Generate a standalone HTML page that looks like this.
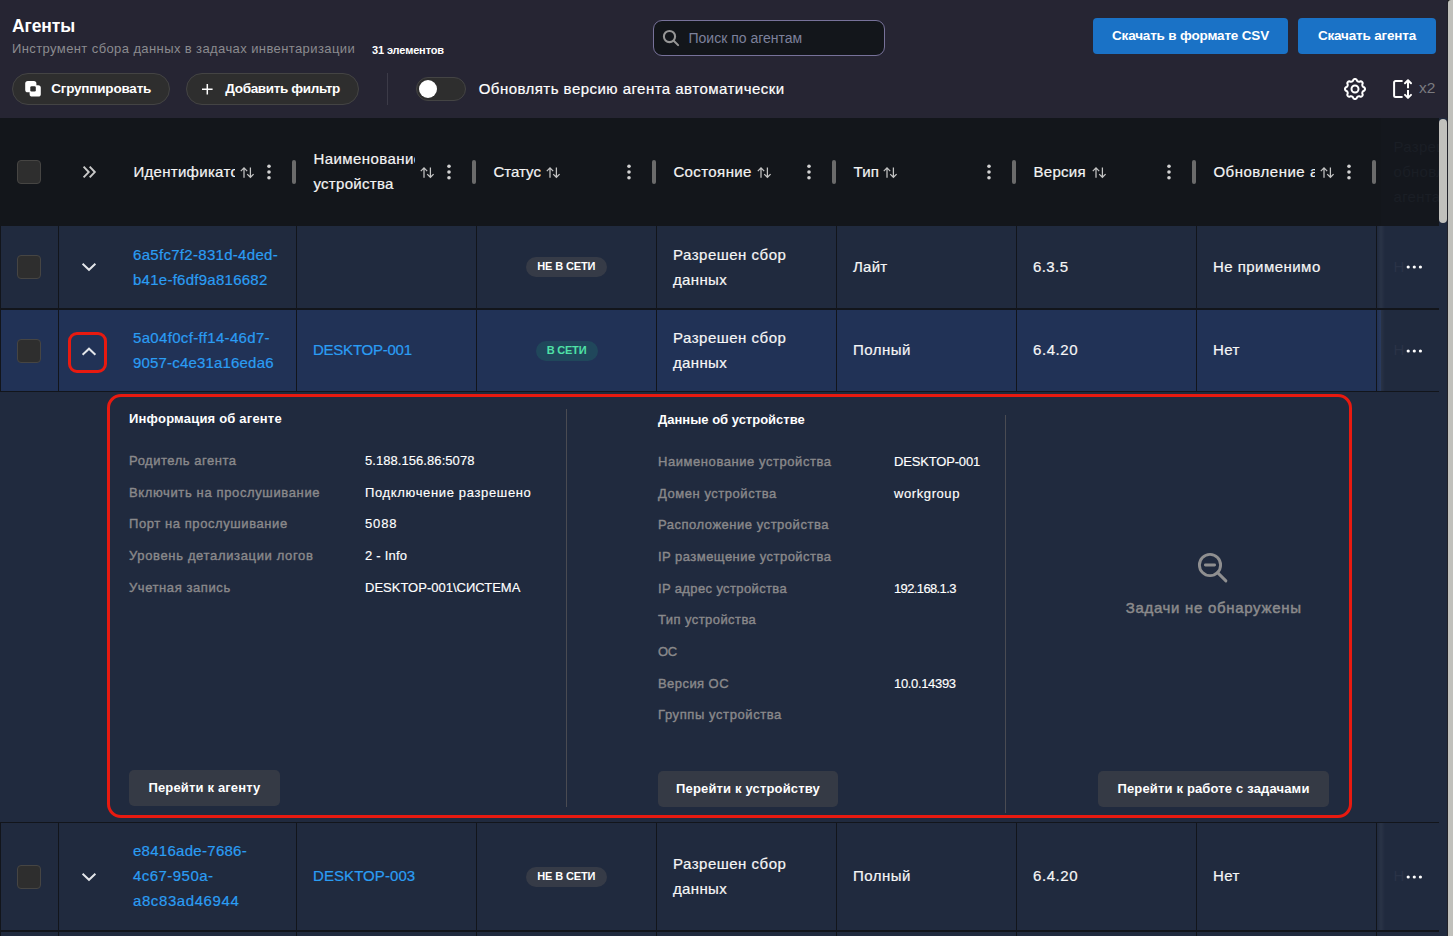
<!DOCTYPE html>
<html lang="ru">
<head>
<meta charset="utf-8">
<title>Агенты</title>
<style>
*{box-sizing:border-box;margin:0;padding:0}
html,body{width:1453px;height:936px;overflow:hidden;background:#262533}
body{font-family:"Liberation Sans",sans-serif;color:#fff;position:relative}
.a{position:absolute;white-space:nowrap}
svg{overflow:visible}
/* top bar */
.title{left:12px;top:16px;font-size:17.5px;line-height:20px;font-weight:bold;letter-spacing:-.12px}
.sub{left:12px;top:41px;font-size:13px;line-height:16px;color:#8b8b8f;letter-spacing:.4px}
.cnt{left:372px;top:43.4px;font-size:11px;line-height:14px;font-weight:bold;letter-spacing:-.13px}
.search{left:653px;top:20px;width:232px;height:36px;border:1px solid #77729a;border-radius:9px;background:#13161b}
.search span{left:34.5px;top:9px;font-size:14px;line-height:16px;color:#7d819b}
.bbtn{top:18px;height:36px;background:#1a72c6;border-radius:4px;font-size:13.5px;font-weight:bold;line-height:36px;text-align:center;letter-spacing:-.17px}
.pill{top:73px;height:32px;border:1px solid #444;border-radius:16px;background:#2e2e2e;font-size:13.5px;font-weight:bold;line-height:30px}
.vdiv{left:387px;top:73px;width:1px;height:32px;background:#3c3b48}
.toggle{left:416px;top:77px;width:50px;height:24px;border-radius:12px;background:#2e2e2e;border:1px solid #444}
.knob{left:419px;top:80px;width:18px;height:18px;border-radius:50%;background:#fff}
.tlabel{left:478.7px;top:78.9px;font-size:15px;line-height:20px;letter-spacing:.47px;-webkit-text-stroke:.2px}
/* table */
.thead{left:0;top:118px;width:1439px;height:108px;background:#13161b}
.tbody{left:0;top:226px;width:1447px;height:710px;background:#202a3e}
.tside{left:1439px;top:118px;width:8px;height:108px;background:#202a3e}
.row{left:1px;width:1438px;background:#202a3e}
.row.sel{background:#213256}
.hl{left:0;width:1439px;background:#12151b}
.vl{width:1px;background:#12151b}
.cb{left:17px;width:24px;height:24px;border-radius:4px;background:#2e2e2e;border:1px solid #464543}
.ht{font-size:15px;line-height:25px;color:#f4f4f4;overflow:hidden;-webkit-text-stroke:.2px}
.ct{font-size:15px;line-height:25px;color:#f6f6f6;letter-spacing:.4px;-webkit-text-stroke:.2px}
.lnk{color:#2b9df3;letter-spacing:.35px}
.rh{width:4px;height:24px;top:160px;border-radius:2px;background:#6b6b6b}
.badge{height:20px;border-radius:10px;font-size:11px;font-weight:bold;line-height:18px;text-align:center}
.stk{left:1381px;width:58px;background:#202a3e}
/* detail */
.red{border:3px solid #e81a10}
.dt{font-size:13px;line-height:16px;font-weight:bold}
.dl{font-size:13px;line-height:16px;color:#8a898b;letter-spacing:.56px;-webkit-text-stroke:.38px #8a898b}
.dv{font-size:13px;line-height:16px;color:#fff;-webkit-text-stroke:.15px}
.dbtn{height:36px;border-radius:5px;background:#353a45;font-size:13px;font-weight:bold;line-height:36px;text-align:center;letter-spacing:.16px}
.pd{width:1px;background:#4a4b52}
</style>
</head>
<body>
<!-- TOPBAR -->
<div class="a title">Агенты</div>
<div class="a sub">Инструмент сбора данных в задачах инвентаризации</div>
<div class="a cnt">31 элементов</div>
<div class="a search">
  <svg class="a" style="left:0;top:0" width="30" height="30" viewBox="0 0 30 30" fill="none" stroke="#969696" stroke-width="2.050" stroke-linecap="round"><circle cx="15.500" cy="15.500" r="5.600"/><path d="M19.700 19.700l4.400 4.400"/></svg>
  <span class="a">Поиск по агентам</span>
</div>
<div class="a bbtn" style="left:1093px;width:195px">Скачать в формате CSV</div>
<div class="a bbtn" style="left:1298px;width:138px">Скачать агента</div>

<div class="a pill" style="left:12px;width:158px">
  <svg class="a" style="left:12px;top:7px" width="17" height="17" viewBox="0 0 17 17"><rect x="0.200" y="0.100" width="11.200" height="11.200" rx="2.600" fill="#fff"/><rect x="4.600" y="4.300" width="11.200" height="11.300" rx="2.600" fill="#fff"/><rect x="5.300" y="5.200" width="5.500" height="5.400" rx="1.300" fill="#2e2e2e"/></svg>
  <span class="a" style="left:38.2px;top:0;letter-spacing:-.2px">Сгруппировать</span>
</div>
<div class="a pill" style="left:186px;width:173px">
  <svg class="a" style="left:14.600px;top:9.700px" width="10.600" height="10.600" viewBox="0 0 10.600 10.600" stroke="#fff" stroke-width="1.500"><path d="M5.300 0v10.600M0 5.300h10.600"/></svg>
  <span class="a" style="left:38.3px;top:0;letter-spacing:-.34px">Добавить фильтр</span>
</div>
<div class="a vdiv"></div>
<div class="a toggle"></div><div class="a knob"></div>
<div class="a tlabel">Обновлять версию агента автоматически</div>
<!-- gear -->
<svg class="a" style="left:1343px;top:77.100px" width="24" height="24" viewBox="0 0 24 24" fill="none" stroke="#fff" stroke-width="2" stroke-linejoin="round"><circle cx="12" cy="12" r="3.500"/><path d="M12.00 2.00L12.39 2.03L12.78 2.14L13.15 2.31L13.49 2.57L13.77 3.12L14.00 3.68L14.26 3.97L14.54 4.20L14.81 4.38L15.10 4.52L15.40 4.62L15.72 4.69L16.08 4.72L16.47 4.71L17.03 4.48L17.61 4.28L18.04 4.34L18.43 4.48L18.77 4.68L19.07 4.93L19.32 5.23L19.52 5.57L19.66 5.96L19.72 6.39L19.52 6.97L19.29 7.53L19.28 7.92L19.31 8.28L19.38 8.60L19.48 8.90L19.62 9.19L19.80 9.46L20.03 9.74L20.32 10.00L20.88 10.23L21.43 10.51L21.69 10.85L21.86 11.22L21.97 11.61L22.00 12.00L21.97 12.39L21.86 12.78L21.69 13.15L21.43 13.49L20.88 13.77L20.32 14.00L20.03 14.26L19.80 14.54L19.62 14.81L19.48 15.10L19.38 15.40L19.31 15.72L19.28 16.08L19.29 16.47L19.52 17.03L19.72 17.61L19.66 18.04L19.52 18.43L19.32 18.77L19.07 19.07L18.77 19.32L18.43 19.52L18.04 19.66L17.61 19.72L17.03 19.52L16.47 19.29L16.08 19.28L15.72 19.31L15.40 19.38L15.10 19.48L14.81 19.62L14.54 19.80L14.26 20.03L14.00 20.32L13.77 20.88L13.49 21.43L13.15 21.69L12.78 21.86L12.39 21.97L12.00 22.00L11.61 21.97L11.22 21.86L10.85 21.69L10.51 21.43L10.23 20.88L10.00 20.32L9.74 20.03L9.46 19.80L9.19 19.62L8.90 19.48L8.60 19.38L8.28 19.31L7.92 19.28L7.53 19.29L6.97 19.52L6.39 19.72L5.96 19.66L5.57 19.52L5.23 19.32L4.93 19.07L4.68 18.77L4.48 18.43L4.34 18.04L4.28 17.61L4.48 17.03L4.71 16.47L4.72 16.08L4.69 15.72L4.62 15.40L4.52 15.10L4.38 14.81L4.20 14.54L3.97 14.26L3.68 14.00L3.12 13.77L2.57 13.49L2.31 13.15L2.14 12.78L2.03 12.39L2.00 12.00L2.03 11.61L2.14 11.22L2.31 10.85L2.57 10.51L3.12 10.23L3.68 10.00L3.97 9.74L4.20 9.46L4.38 9.19L4.52 8.90L4.62 8.60L4.69 8.28L4.72 7.92L4.71 7.53L4.48 6.97L4.28 6.39L4.34 5.96L4.48 5.57L4.68 5.23L4.93 4.93L5.23 4.68L5.57 4.48L5.96 4.34L6.39 4.28L6.97 4.48L7.53 4.71L7.92 4.72L8.28 4.69L8.60 4.62L8.90 4.52L9.19 4.38L9.46 4.20L9.74 3.97L10.00 3.68L10.23 3.12L10.51 2.57L10.85 2.31L11.22 2.14L11.61 2.03Z"/></svg>
<!-- expand -->
<svg class="a" style="left:1391px;top:77px" width="24" height="24" viewBox="0 0 24 24" fill="none" stroke="#fff" stroke-width="2" stroke-linejoin="round"><path d="M11.600 4H4.600a1.500 1.500 0 0 0-1.500 1.500v13a1.500 1.500 0 0 0 1.500 1.500H11.600"/><path d="M17 3.400v7.900M17 12.900v7.900"/><path stroke-linecap="round" d="M14 6.300L17 3.300l3 3M14 17.900L17 20.900l3-3"/></svg>
<div class="a" style="left:1419px;top:77.700px;font-size:15.500px;line-height:20px;color:#7a7b80">x2</div>

<!-- TABLE -->
<div class="a thead"></div>
<div class="a tbody"></div>
<div class="a tside"></div>
<div class="a row" style="top:226px;height:82px"></div>
<div class="a vl" style="left:0px;top:226px;height:82px"></div>
<div class="a vl" style="left:58px;top:226px;height:82px"></div>
<div class="a vl" style="left:296px;top:226px;height:82px"></div>
<div class="a vl" style="left:476px;top:226px;height:82px"></div>
<div class="a vl" style="left:656px;top:226px;height:82px"></div>
<div class="a vl" style="left:836px;top:226px;height:82px"></div>
<div class="a vl" style="left:1016px;top:226px;height:82px"></div>
<div class="a vl" style="left:1196px;top:226px;height:82px"></div>
<div class="a vl" style="left:1376px;top:226px;height:82px"></div>
<div class="a stk" style="top:226px;height:82px"></div>
<div class="a" style="left:1377px;top:226px;width:8px;height:82px;background:linear-gradient(90deg,rgba(255,255,255,0) 0,rgba(255,255,255,.045) 50%,rgba(255,255,255,0) 100%)"></div>
<div class="a cb" style="top:255.0px"></div>
<svg class="a" style="left:82px;top:263.0px" width="14" height="7.500" viewBox="0 0 14 7.500" fill="none" stroke="#e4e6ea" stroke-width="1.950"><path d="M0.600 0.700L7 6.800l6.400-6.100"/></svg>
<div class="a ct lnk" style="left:133px;top:241.5px"><span style="letter-spacing:0.3px">6a5fc7f2-831d-4ded-</span><br><span style="letter-spacing:0.26px">b41e-f6df9a816682</span></div>
<div class="a badge" style="left:525.500px;top:257.0px;width:81.500px;background:#363b47;color:#fff;letter-spacing:-.14px">НЕ В СЕТИ</div>
<div class="a ct" style="left:673px;top:241.5px;letter-spacing:.5px">Разрешен сбор<br><span style="letter-spacing:.34px">данных</span></div>
<div class="a ct" style="left:853px;top:253.5px;letter-spacing:0.27px">Лайт</div>
<div class="a ct" style="left:1033px;top:253.5px;letter-spacing:0.42px">6.3.5</div>
<div class="a ct" style="left:1213px;top:253.5px;letter-spacing:0.46px">Не применимо</div>
<div class="a" style="left:1393.500px;top:253.5px;font-size:15px;line-height:25px;color:#2a3347">Н</div>
<svg class="a" style="left:1406px;top:265.3px" width="17" height="4" viewBox="0 0 17 4" fill="#fff"><circle cx="2.200" cy="2" r="1.600"/><circle cx="8.300" cy="2" r="1.600"/><circle cx="14.400" cy="2" r="1.600"/></svg>
<div class="a hl" style="top:308px;height:2px"></div>
<div class="a row sel" style="top:310px;height:81px"></div>
<div class="a vl" style="left:0px;top:310px;height:81px"></div>
<div class="a vl" style="left:58px;top:310px;height:81px"></div>
<div class="a vl" style="left:296px;top:310px;height:81px"></div>
<div class="a vl" style="left:476px;top:310px;height:81px"></div>
<div class="a vl" style="left:656px;top:310px;height:81px"></div>
<div class="a vl" style="left:836px;top:310px;height:81px"></div>
<div class="a vl" style="left:1016px;top:310px;height:81px"></div>
<div class="a vl" style="left:1196px;top:310px;height:81px"></div>
<div class="a vl" style="left:1376px;top:310px;height:81px"></div>
<div class="a stk" style="top:310px;height:81px"></div>
<div class="a" style="left:1377px;top:310px;width:8px;height:81px;background:linear-gradient(90deg,rgba(255,255,255,0) 0,rgba(255,255,255,.045) 50%,rgba(255,255,255,0) 100%)"></div>
<div class="a cb" style="top:338.5px"></div>
<svg class="a" style="left:82px;top:347.5px" width="14" height="7.500" viewBox="0 0 14 7.500" fill="none" stroke="#e4e6ea" stroke-width="1.950"><path d="M0.600 6.800L7 0.700l6.400 6.100"/></svg>
<div class="a ct lnk" style="left:133px;top:325.0px"><span style="letter-spacing:0.33px">5a04f0cf-ff14-46d7-</span><br><span style="letter-spacing:0.18px">9057-c4e31a16eda6</span></div>
<div class="a ct lnk" style="left:313px;top:337.0px;letter-spacing:-0.24px">DESKTOP-001</div>
<div class="a badge" style="left:536px;top:340.5px;width:62px;background:#20475b;color:#4fe1a7;letter-spacing:-.2px;text-indent:-1px">В СЕТИ</div>
<div class="a ct" style="left:673px;top:325.0px;letter-spacing:.5px">Разрешен сбор<br><span style="letter-spacing:.34px">данных</span></div>
<div class="a ct" style="left:853px;top:337.0px;letter-spacing:0.47px">Полный</div>
<div class="a ct" style="left:1033px;top:337.0px;letter-spacing:0.56px">6.4.20</div>
<div class="a ct" style="left:1213px;top:337.0px;letter-spacing:0.42px">Нет</div>
<div class="a" style="left:1393.500px;top:337.0px;font-size:15px;line-height:25px;color:#2a3347">Н</div>
<svg class="a" style="left:1406px;top:348.8px" width="17" height="4" viewBox="0 0 17 4" fill="#fff"><circle cx="2.200" cy="2" r="1.600"/><circle cx="8.300" cy="2" r="1.600"/><circle cx="14.400" cy="2" r="1.600"/></svg>
<div class="a hl" style="top:391px;height:1px"></div>
<div class="a hl" style="top:822px;height:1px"></div>
<div class="a row" style="top:823px;height:107px"></div>
<div class="a vl" style="left:0px;top:823px;height:107px"></div>
<div class="a vl" style="left:58px;top:823px;height:107px"></div>
<div class="a vl" style="left:296px;top:823px;height:107px"></div>
<div class="a vl" style="left:476px;top:823px;height:107px"></div>
<div class="a vl" style="left:656px;top:823px;height:107px"></div>
<div class="a vl" style="left:836px;top:823px;height:107px"></div>
<div class="a vl" style="left:1016px;top:823px;height:107px"></div>
<div class="a vl" style="left:1196px;top:823px;height:107px"></div>
<div class="a vl" style="left:1376px;top:823px;height:107px"></div>
<div class="a stk" style="top:823px;height:107px"></div>
<div class="a" style="left:1377px;top:823px;width:8px;height:107px;background:linear-gradient(90deg,rgba(255,255,255,0) 0,rgba(255,255,255,.045) 50%,rgba(255,255,255,0) 100%)"></div>
<div class="a cb" style="top:864.5px"></div>
<svg class="a" style="left:82px;top:872.5px" width="14" height="7.500" viewBox="0 0 14 7.500" fill="none" stroke="#e4e6ea" stroke-width="1.950"><path d="M0.600 0.700L7 6.800l6.400-6.100"/></svg>
<div class="a ct lnk" style="left:133px;top:838.0px"><span style="letter-spacing:0.28px">e8416ade-7686-</span><br><span style="letter-spacing:0.46px">4c67-950a-</span><br><span style="letter-spacing:0.59px">a8c83ad46944</span></div>
<div class="a ct lnk" style="left:313px;top:863.0px;letter-spacing:0.07px">DESKTOP-003</div>
<div class="a badge" style="left:525.500px;top:866.5px;width:81.500px;background:#363b47;color:#fff;letter-spacing:-.14px">НЕ В СЕТИ</div>
<div class="a ct" style="left:673px;top:851.0px;letter-spacing:.5px">Разрешен сбор<br><span style="letter-spacing:.34px">данных</span></div>
<div class="a ct" style="left:853px;top:863.0px;letter-spacing:0.47px">Полный</div>
<div class="a ct" style="left:1033px;top:863.0px;letter-spacing:0.56px">6.4.20</div>
<div class="a ct" style="left:1213px;top:863.0px;letter-spacing:0.42px">Нет</div>
<div class="a" style="left:1393.500px;top:863.0px;font-size:15px;line-height:25px;color:#2a3347">Н</div>
<svg class="a" style="left:1406px;top:874.8px" width="17" height="4" viewBox="0 0 17 4" fill="#fff"><circle cx="2.200" cy="2" r="1.600"/><circle cx="8.300" cy="2" r="1.600"/><circle cx="14.400" cy="2" r="1.600"/></svg>
<div class="a hl" style="top:930px;height:2px"></div>
<div class="a vl" style="left:0px;top:932px;height:4px"></div>
<div class="a vl" style="left:58px;top:932px;height:4px"></div>
<div class="a vl" style="left:296px;top:932px;height:4px"></div>
<div class="a vl" style="left:476px;top:932px;height:4px"></div>
<div class="a vl" style="left:656px;top:932px;height:4px"></div>
<div class="a vl" style="left:836px;top:932px;height:4px"></div>
<div class="a vl" style="left:1016px;top:932px;height:4px"></div>
<div class="a vl" style="left:1196px;top:932px;height:4px"></div>
<div class="a vl" style="left:1376px;top:932px;height:4px"></div>
<div class="a red" style="left:68px;top:332px;width:39px;height:41px;border-radius:9px"></div>
<div class="a cb" style="top:160px"></div>
<svg class="a" style="left:82px;top:165px" width="15" height="14" viewBox="0 0 15 14" fill="none" stroke="#c9c9c9" stroke-width="1.950"><path d="M1.600 1.700L6.700 7.050 1.600 12.400M7.700 1.700L12.800 7.050 7.700 12.400"/></svg>
<div class="a ht" style="left:133.4px;top:158.5px;width:101.5px;letter-spacing:0.3px">Идентификатор</div>
<svg class="a" style="left:240px;top:166.5px" width="15" height="12" viewBox="0 0 15 12" fill="none" stroke="#c4c4c4" stroke-width="1.25"><path d="M4 10.700V0.900M0.800 4.100L4 0.900l3.200 3.200"/><path d="M10.400 0.400V10.300M7.200 7.100L10.400 10.300l3.200-3.200"/></svg>
<svg class="a" style="left:267.1px;top:164px" width="4" height="17" viewBox="0 0 4 17" fill="#d2d2d2"><circle cx="2" cy="2.200" r="1.800"/><circle cx="2" cy="8" r="1.800"/><circle cx="2" cy="13.800" r="1.800"/></svg>
<div class="a rh" style="left:292px"></div>
<div class="a ht" style="left:313.4px;top:146.0px;width:101.5px;letter-spacing:0.3px"><span style="letter-spacing:.43px">Наименование</span><br>устройства</div>
<svg class="a" style="left:420px;top:166.5px" width="15" height="12" viewBox="0 0 15 12" fill="none" stroke="#c4c4c4" stroke-width="1.25"><path d="M4 10.700V0.900M0.800 4.100L4 0.900l3.200 3.200"/><path d="M10.400 0.400V10.300M7.200 7.100L10.400 10.300l3.200-3.200"/></svg>
<svg class="a" style="left:447.1px;top:164px" width="4" height="17" viewBox="0 0 4 17" fill="#d2d2d2"><circle cx="2" cy="2.200" r="1.800"/><circle cx="2" cy="8" r="1.800"/><circle cx="2" cy="13.800" r="1.800"/></svg>
<div class="a rh" style="left:472px"></div>
<div class="a ht" style="left:493.4px;top:158.5px;letter-spacing:0.03px">Статус</div>
<svg class="a" style="left:546px;top:166.5px" width="15" height="12" viewBox="0 0 15 12" fill="none" stroke="#c4c4c4" stroke-width="1.25"><path d="M4 10.700V0.900M0.800 4.100L4 0.900l3.200 3.200"/><path d="M10.400 0.400V10.300M7.200 7.100L10.400 10.300l3.200-3.200"/></svg>
<svg class="a" style="left:627.1px;top:164px" width="4" height="17" viewBox="0 0 4 17" fill="#d2d2d2"><circle cx="2" cy="2.200" r="1.800"/><circle cx="2" cy="8" r="1.800"/><circle cx="2" cy="13.800" r="1.800"/></svg>
<div class="a rh" style="left:652px"></div>
<div class="a ht" style="left:673.4px;top:158.5px;letter-spacing:0.4px">Состояние</div>
<svg class="a" style="left:757px;top:166.5px" width="15" height="12" viewBox="0 0 15 12" fill="none" stroke="#c4c4c4" stroke-width="1.25"><path d="M4 10.700V0.900M0.800 4.100L4 0.900l3.200 3.200"/><path d="M10.400 0.400V10.300M7.200 7.100L10.400 10.300l3.200-3.200"/></svg>
<svg class="a" style="left:807.1px;top:164px" width="4" height="17" viewBox="0 0 4 17" fill="#d2d2d2"><circle cx="2" cy="2.200" r="1.800"/><circle cx="2" cy="8" r="1.800"/><circle cx="2" cy="13.800" r="1.800"/></svg>
<div class="a rh" style="left:832px"></div>
<div class="a ht" style="left:853.4px;top:158.5px;letter-spacing:0.3px">Тип</div>
<svg class="a" style="left:987.1px;top:164px" width="4" height="17" viewBox="0 0 4 17" fill="#d2d2d2"><circle cx="2" cy="2.200" r="1.800"/><circle cx="2" cy="8" r="1.800"/><circle cx="2" cy="13.800" r="1.800"/></svg>
<div class="a rh" style="left:1012px"></div>
<div class="a ht" style="left:1033.4px;top:158.5px;letter-spacing:0.32px">Версия</div>
<svg class="a" style="left:1092px;top:166.5px" width="15" height="12" viewBox="0 0 15 12" fill="none" stroke="#c4c4c4" stroke-width="1.25"><path d="M4 10.700V0.900M0.800 4.100L4 0.900l3.200 3.200"/><path d="M10.400 0.400V10.300M7.200 7.100L10.400 10.300l3.200-3.200"/></svg>
<svg class="a" style="left:1167.1px;top:164px" width="4" height="17" viewBox="0 0 4 17" fill="#d2d2d2"><circle cx="2" cy="2.200" r="1.800"/><circle cx="2" cy="8" r="1.800"/><circle cx="2" cy="13.800" r="1.800"/></svg>
<div class="a rh" style="left:1192px"></div>
<div class="a ht" style="left:1213.4px;top:158.5px;width:102px;letter-spacing:0.52px">Обновление агента</div>
<svg class="a" style="left:1320px;top:166.5px" width="15" height="12" viewBox="0 0 15 12" fill="none" stroke="#c4c4c4" stroke-width="1.25"><path d="M4 10.700V0.900M0.800 4.100L4 0.900l3.200 3.200"/><path d="M10.400 0.400V10.300M7.200 7.100L10.400 10.300l3.200-3.200"/></svg>
<svg class="a" style="left:1347.1px;top:164px" width="4" height="17" viewBox="0 0 4 17" fill="#d2d2d2"><circle cx="2" cy="2.200" r="1.800"/><circle cx="2" cy="8" r="1.800"/><circle cx="2" cy="13.800" r="1.800"/></svg>
<div class="a rh" style="left:1372px"></div>
<svg class="a" style="left:883px;top:166.5px" width="15" height="12" viewBox="0 0 15 12" fill="none" stroke="#c4c4c4" stroke-width="1.25"><path d="M4 10.700V0.900M0.800 4.100L4 0.900l3.200 3.200"/><path d="M10.400 0.400V10.300M7.200 7.100L10.400 10.300l3.200-3.200"/></svg>
<div class="a" style="left:1381px;top:118px;width:58px;height:108px;background:#14171d;overflow:hidden"><div class="a" style="left:12.500px;top:16px;font-size:15px;line-height:25px;color:#1a1e25;letter-spacing:.3px">Разрешить<br>обновление<br>агента</div></div>
<div class="a red" style="left:107px;top:394px;width:1245px;height:424px;border-radius:14px"></div>
<div class="a pd" style="left:566px;top:409px;height:398px"></div>
<div class="a pd" style="left:1005px;top:415px;height:398px"></div>
<div class="a dt" style="left:129px;top:410.700px;letter-spacing:.2px">Информация об агенте</div>
<div class="a dl" style="left:129px;top:452.5px;letter-spacing:0.53px">Родитель агента</div>
<div class="a dv" style="left:365px;top:452.5px;letter-spacing:0.06px">5.188.156.86:5078</div>
<div class="a dl" style="left:129px;top:484.5px;letter-spacing:0.63px">Включить на прослушивание</div>
<div class="a dv" style="left:365px;top:484.5px;letter-spacing:0.65px">Подключение разрешено</div>
<div class="a dl" style="left:129px;top:515.5px;letter-spacing:0.58px">Порт на прослушивание</div>
<div class="a dv" style="left:365px;top:515.5px;letter-spacing:0.84px">5088</div>
<div class="a dl" style="left:129px;top:547.5px;letter-spacing:0.65px">Уровень детализации логов</div>
<div class="a dv" style="left:365px;top:547.5px;letter-spacing:0.22px">2 - Info</div>
<div class="a dl" style="left:129px;top:579.5px;letter-spacing:0.58px">Учетная запись</div>
<div class="a dv" style="left:365px;top:579.5px;letter-spacing:0px">DESKTOP-001\СИСТЕМА</div>
<div class="a dbtn" style="left:129px;top:770px;width:151px">Перейти к агенту</div>
<div class="a dt" style="left:658px;top:411.700px">Данные об устройстве</div>
<div class="a dl" style="left:658px;top:453.5px;letter-spacing:0.56px">Наименование устройства</div>
<div class="a dv" style="left:894px;top:453.5px;letter-spacing:-0.17px">DESKTOP-001</div>
<div class="a dl" style="left:658px;top:485.5px;letter-spacing:0.54px">Домен устройства</div>
<div class="a dv" style="left:894px;top:485.5px;letter-spacing:0.59px">workgroup</div>
<div class="a dl" style="left:658px;top:516.5px;letter-spacing:0.52px">Расположение устройства</div>
<div class="a dl" style="left:658px;top:548.5px;letter-spacing:0.47px">IP размещение устройства</div>
<div class="a dl" style="left:658px;top:580.5px;letter-spacing:0.37px">IP адрес устройства</div>
<div class="a dv" style="left:894px;top:580.5px;letter-spacing:-0.63px">192.168.1.3</div>
<div class="a dl" style="left:658px;top:611.5px;letter-spacing:0.43px">Тип устройства</div>
<div class="a dl" style="left:658px;top:643.5px;letter-spacing:-0.3px">ОС</div>
<div class="a dl" style="left:658px;top:675.5px;letter-spacing:0.44px">Версия ОС</div>
<div class="a dv" style="left:894px;top:675.5px;letter-spacing:-0.34px">10.0.14393</div>
<div class="a dl" style="left:658px;top:706.5px;letter-spacing:0.59px">Группы устройства</div>
<div class="a dbtn" style="left:658px;top:771px;width:180px">Перейти к устройству</div>
<svg class="a" style="left:1196px;top:551px" width="34" height="34" viewBox="0 0 34 34" fill="none" stroke="#8f8f90" stroke-width="2.900" stroke-linecap="round"><circle cx="14" cy="14" r="10.600"/><path d="M9.400 14h9.200M21.600 21.600l8.300 8.300"/></svg>
<div class="a" style="left:1125.700px;top:598px;font-size:15px;line-height:20px;color:#8c8b8c;letter-spacing:.69px;-webkit-text-stroke:.45px #8c8b8c">Задачи не обнаружены</div>
<div class="a dbtn" style="left:1098px;top:771px;width:231px">Перейти к работе с задачами</div>
<div class="a" style="left:1439px;top:119px;width:8px;height:104px;border-radius:4px;background:#c1c0bc"></div>
<div class="a" style="left:1447px;top:0;width:1px;height:936px;background:#212129"></div>
<div class="a" style="left:1448px;top:0;width:5px;height:4px;background:#0f1112"></div>
<div class="a" style="left:1448px;top:0;width:5px;height:936px;background:#c0c0bb;border-top-left-radius:3px"></div>
</body>
</html>
